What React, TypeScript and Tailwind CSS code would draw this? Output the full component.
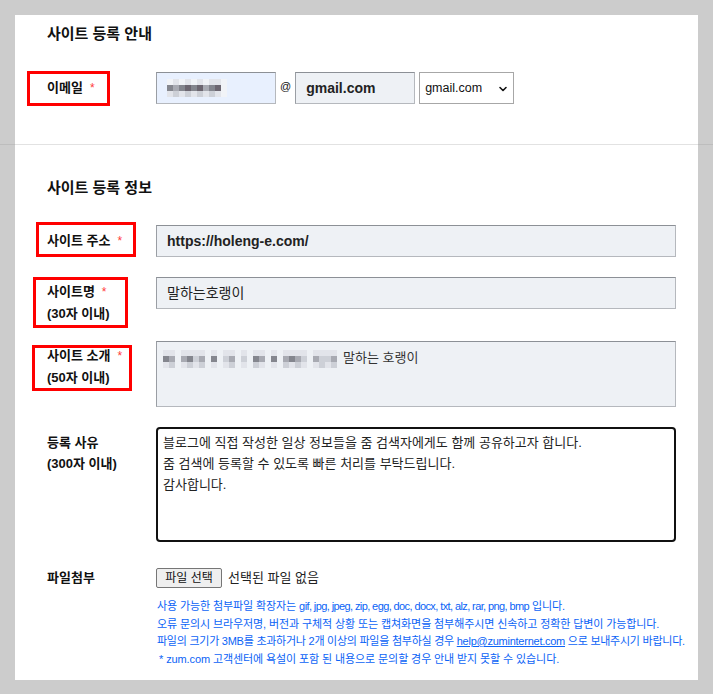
import React from "react";
import { ChevronDown } from "lucide-react";

const shades: Record<string, string> = {
  "0": "#f1f3f7",
  "1": "#e2e4ea",
  "2": "#cdd0d7",
  "3": "#a8aab2",
  "4": "#84868e",
  "5": "#6c6670",
};

// pixelated (blurred) personal info
function Mosaic({ rows }: { rows: string[] }) {
  return (
    <div className="flex flex-col">
      {rows.map((row, r) => (
        <div key={r} className="flex">
          {row.split("").map((c, i) => (
            <span
              key={i}
              className="w-[6px] h-[6px]"
              style={{ background: shades[c] ?? "transparent" }}
            />
          ))}
        </div>
      ))}
    </div>
  );
}

function Req() {
  return <span className="ml-[7px] text-[12px] text-[#ff3b3b] font-normal">*</span>;
}

const borderCls = "h-[32px] border border-[#b5b8bd] border-t-[#8c9096] border-l-[#9a9ea4] outline-none";

export default function App() {
  return (
    <div className="min-h-[694px] w-full bg-[#cccccc] font-['Liberation_Sans','Noto_Sans_CJK_KR',sans-serif] text-[#111]">
      {/* 사이트 등록 안내 */}
      <div className="px-[15px] pt-[15px]">
        <div className="h-[129px] bg-white pl-[32px] pr-[22px] pt-[8px]">
          <h2 className="h-[22px] text-[15px] leading-[22px] font-bold">사이트 등록 안내</h2>
          <div className="mt-[27px] flex items-center">
            <div className="relative flex h-[32px] w-[109px] shrink-0 items-center text-[13px] font-bold">
              <span className="absolute -left-[20px] -top-[1px] h-[35px] w-[83px] border-[3px] border-[#ff0000]" />
              이메일
              <Req />
            </div>
            <div className={`${borderCls} flex w-[120px] items-center bg-[#e8f0fe] pl-[10px]`}>
              <Mosaic rows={["0101010110", "4345453450", "1212121210"]} />
            </div>
            <span className="mx-[4px] -mt-[4px] text-[11px]">@</span>
            <div className={`${borderCls} flex w-[120px] items-center bg-[#eef1f5] pl-[10px] text-[14px] font-bold text-[#222]`}>
              gmail.com
            </div>
            <div className="relative ml-[4px] flex h-[32px] w-[95px] items-center border border-[#a7a7a7] bg-white pl-[5px] text-[12.5px] text-[#111]">
              gmail.com
              <ChevronDown className="absolute right-[4px] top-[10px] h-[12px] w-[12px]" strokeWidth={3.2} />
            </div>
          </div>
        </div>
      </div>

      <div className="flex h-px">
        <div className="w-[15px] bg-[#bdbdbd]" />
        <div className="flex-1 bg-[#e2e2e2]" />
        <div className="w-[15px] bg-[#bdbdbd]" />
      </div>

      {/* 사이트 등록 정보 */}
      <div className="px-[15px] pb-[15px]">
        <div className="bg-white pl-[32px] pr-[22px] pt-[32px] pb-[12px]">
          <h2 className="h-[22px] text-[15px] leading-[22px] font-bold">사이트 등록 정보</h2>

          {/* 사이트 주소 */}
          <div className="mt-[26px] flex items-start">
            <div className="relative flex h-[32px] w-[109px] shrink-0 items-center text-[13px] font-bold">
              <span className="absolute -left-[11px] -top-[3px] h-[35px] w-[100px] border-[3px] border-[#ff0000]" />
              사이트 주소
              <Req />
            </div>
            <div className={`${borderCls} flex flex-1 items-center bg-[#eef1f5] pl-[10px] text-[14px] font-bold text-[#222]`}>
              https://holeng-e.com/
            </div>
          </div>

          {/* 사이트명 */}
          <div className="mt-[20px] flex items-start">
            <div className="relative w-[109px] shrink-0 pt-[4px] text-[13px] leading-[21px] font-bold">
              <span className="absolute -left-[14px] top-0 h-[51px] w-[95px] border-[3px] border-[#ff0000]" />
              <div>
                사이트명
                <Req />
              </div>
              <div>(30자 이내)</div>
            </div>
            <div className={`${borderCls} flex flex-1 items-center bg-[#eef1f5] pl-[10px] text-[14px] text-[#222]`}>
              말하는호랭이
            </div>
          </div>

          {/* 사이트 소개 */}
          <div className="mt-[17px] flex items-start">
            <div className="relative w-[109px] shrink-0 pt-[4px] text-[13px] leading-[21px] font-bold">
              <span className="absolute -left-[15px] top-[4px] h-[46px] w-[100px] border-[3px] border-[#ff0000]" />
              <div>
                사이트 소개
                <Req />
              </div>
              <div>(50자 이내)</div>
            </div>
            <div className="flex h-[66px] flex-1 items-start border border-[#b5b8bd] border-t-[#8c9096] border-l-[#9a9ea4] bg-[#eef1f5] pl-[6px] pt-[8px] text-[13px] text-[#333]">
              <Mosaic
                rows={[
                  "11 1111 1 11 1 11 1 1111 1111",
                  "43 3423 4 23 2 43 4 3432 3223",
                  "12 1212 1 12 1 21 1 2121 1212",
                ]}
              />
              <span className="ml-[6px] -mt-[2px] leading-[20px]">말하는 호랭이</span>
            </div>
          </div>

          {/* 등록 사유 */}
          <div className="mt-[20px] flex items-start">
            <div className="w-[109px] shrink-0 pt-[5px] text-[13px] leading-[21px] font-bold">
              <div>등록 사유</div>
              <div>(300자 이내)</div>
            </div>
            <textarea
              readOnly
              className="h-[115px] flex-1 resize-none rounded-[4px] border-2 border-[#111] bg-white px-[5px] pt-[3px] text-[13px] leading-[21px] text-[#222] outline-none"
              value={
                "블로그에 직접 작성한 일상 정보들을 줌 검색자에게도 함께 공유하고자 합니다.\n줌 검색에 등록할 수 있도록 빠른 처리를 부탁드립니다.\n감사합니다."
              }
            />
          </div>

          {/* 파일첨부 */}
          <div className="mt-[26px] flex items-center">
            <div className="w-[109px] shrink-0 text-[13px] font-bold">파일첨부</div>
            <button className="h-[20px] w-[66px] rounded-[2px] border border-[#767676] bg-[#efefef] text-[12px] leading-[18px] text-[#111]">
              파일 선택
            </button>
            <span className="ml-[6px] text-[13px] text-[#222]">선택된 파일 없음</span>
          </div>

          <div className="-mr-[20px] ml-[110px] mt-[10px] whitespace-nowrap text-[11px] leading-[17.5px] tracking-[-0.1px] text-[#0b63f6]">
            <p>
              사용 가능한 첨부파일 확장자는{" "}
              <span className="tracking-[-0.6px]">gif, jpg, jpeg, zip, egg, doc, docx, txt, alz, rar, png, bmp</span> 입니다.
            </p>
            <p>오류 문의시 브라우저명, 버전과 구체적 상황 또는 캡쳐화면을 첨부해주시면 신속하고 정확한 답변이 가능합니다.</p>
            <p className="tracking-[-0.25px]">
              파일의 크기가 3MB를 초과하거나 2개 이상의 파일을 첨부하실 경우{" "}
              <a className="underline">help@zuminternet.com</a> 으로 보내주시기 바랍니다.
            </p>
            <p className="pl-[2px]">* zum.com 고객센터에 욕설이 포함 된 내용으로 문의할 경우 안내 받지 못할 수 있습니다.</p>
          </div>
        </div>
      </div>
    </div>
  );
}
